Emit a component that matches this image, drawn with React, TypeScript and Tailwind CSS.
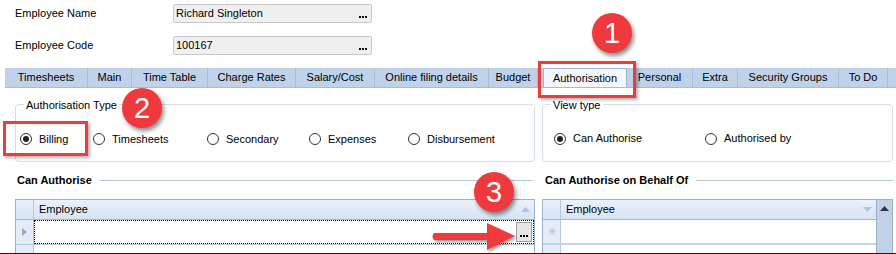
import React from "react";

const Radio = ({ checked }: { checked?: boolean }) => (
  <span className="flex h-[12px] w-[12px] shrink-0 items-center justify-center rounded-full border border-[#333] bg-white">
    {checked && <span className="h-[6px] w-[6px] rounded-full bg-[#222]" />}
  </span>
);

const RadioItem = ({ label, checked, w }: { label: string; checked?: boolean; w: string }) => (
  <div className={`flex items-center gap-[7px] ${w}`}>
    <Radio checked={checked} />
    <span>{label}</span>
  </div>
);

const Badge = ({ n, cls }: { n: string; cls: string }) => (
  <div
    className={`absolute flex h-[40px] w-[40px] items-center justify-center rounded-full bg-[#f0393c] text-[29px] leading-none text-white shadow-[2px_3px_4px_rgba(0,0,0,0.45)] ${cls}`}
    style={{ fontFamily: "'Liberation Sans', Arial, sans-serif" }}
  >
    {n}
  </div>
);

const tabs: { t: string; w: string; active?: boolean }[] = [
  { t: "Timesheets", w: "w-[83px]" },
  { t: "Main", w: "w-[44px]" },
  { t: "Time Table", w: "w-[76px]" },
  { t: "Charge Rates", w: "w-[88px]" },
  { t: "Salary/Cost", w: "w-[79px]" },
  { t: "Online filing details", w: "w-[114px]" },
  { t: "Budget", w: "w-[49px]" },
];
const tabs2 = [
  { t: "Personal", w: "w-[66px]" },
  { t: "Extra", w: "w-[45px]" },
  { t: "Security Groups", w: "w-[101px]" },
  { t: "To Do", w: "w-[49px]" },
];

const Dots = () => (
  <span className="flex items-end gap-[1px] pb-[1px]">
    <span className="h-[2px] w-[2px] bg-black" />
    <span className="h-[2px] w-[2px] bg-black" />
    <span className="h-[2px] w-[2px] bg-black" />
  </span>
);

export default function App() {
  return (
    <div
      className="relative flex h-[254px] w-[896px] flex-col overflow-hidden bg-white text-[11px] text-black"
      style={{ fontFamily: "'Liberation Sans', Arial, sans-serif" }}
    >
      {/* Top fields */}
      <div className="flex flex-col gap-[13px] pl-[15px] pt-[4px]">
        {[
          ["Employee Name", "Richard Singleton"],
          ["Employee Code", "100167"],
        ].map(([l, v]) => (
          <div key={l} className="flex h-[19px] items-center">
            <span className="w-[158px]">{l}</span>
            <div className="flex h-[19px] w-[199px] items-center justify-between rounded-[2px] border border-[#c8c8c8] bg-[#f0f0f0] pl-[2px] pr-[4px]">
              <span>{v}</span>
              <span className="flex h-full items-end pb-[3px]">
                <Dots />
              </span>
            </div>
          </div>
        ))}
      </div>

      {/* Tab bar */}
      <div className="ml-[5px] mt-[13px] flex h-[20px] items-stretch border-b border-[#a7bcd8] bg-[#bfd2ea]">
        {tabs.map((t) => (
          <div key={t.t} className={`flex items-center justify-center border-r border-[#a9bdd7] ${t.w}`}>
            {t.t}
          </div>
        ))}
        <div className="ml-[5px] flex w-[84px] items-center justify-center border border-b-0 border-[#9fb4d0] bg-[#f4f8fd]">
          Authorisation
        </div>
        {tabs2.map((t) => (
          <div key={t.t} className={`flex items-center justify-center border-r border-[#a9bdd7] ${t.w}`}>
            {t.t}
          </div>
        ))}
      </div>

      {/* Group boxes */}
      <div className="ml-[15px] mt-[16px] flex gap-[7px]">
        <div className="relative h-[58px] w-[520px] rounded-[4px] border border-[#d5dde6]">
          <span className="absolute left-[8px] top-[-8px] bg-white px-[2px]">Authorisation Type</span>
          <div className="flex h-full items-center pl-[4px] pt-[12px]">
            <RadioItem label="Billing" checked w="w-[73px]" />
            <RadioItem label="Timesheets" w="w-[114px]" />
            <RadioItem label="Secondary" w="w-[102px]" />
            <RadioItem label="Expenses" w="w-[99px]" />
            <RadioItem label="Disbursement" w="w-[110px]" />
          </div>
        </div>
        <div className="relative h-[58px] w-[351px] rounded-[4px] border border-[#d5dde6]">
          <span className="absolute left-[8px] top-[-8px] bg-white px-[2px]">View type</span>
          <div className="flex h-full items-center pl-[11px] pt-[11px]">
            <RadioItem label="Can Authorise" checked w="w-[151px]" />
            <RadioItem label="Authorised by" w="w-[120px]" />
          </div>
        </div>
      </div>

      {/* Section headers */}
      <div className="mt-[11px] flex h-[14px] items-center">
        <div className="ml-[17px] flex w-[516px] items-center">
          <span className="font-bold">Can Authorise</span>
          <span className="ml-[8px] h-[1px] flex-1 bg-[#b4c6dc]" />
        </div>
        <div className="ml-[12px] flex w-[348px] items-center">
          <span className="font-bold">Can Authorise on Behalf Of</span>
          <span className="ml-[8px] h-[1px] flex-1 bg-[#b4c6dc]" />
        </div>
      </div>

      {/* Grids */}
      <div className="ml-[15px] mt-[12px] flex flex-1 gap-[7px]">
        {/* grid 1 */}
        <div className="flex w-[520px] flex-col border-x border-t border-[#9bb0cc]">
          <div className="flex h-[20px] border-b border-[#a3b7d1] bg-gradient-to-b from-[#eaf2fb] to-[#d6e4f4]">
            <div className="w-[18px] border-r border-[#b7c8de]" />
            <div className="flex flex-1 items-center justify-between pl-[5px] pr-[4px]">
              <span>Employee</span>
              <svg width="9" height="5" viewBox="0 0 9 5">
                <path d="M0 5 L4.5 0 L9 5 Z" fill="#a9c4e6" />
              </svg>
            </div>
          </div>
          <div className="flex h-[25px] border-b border-[#b7c8de]">
            <div className="flex w-[18px] items-center justify-center border-r border-[#b7c8de] bg-[#e4ecf6]">
              <svg width="5" height="8" viewBox="0 0 5 8">
                <path d="M0 0 L5 4 L0 8 Z" fill="#9aa9bb" />
              </svg>
            </div>
            <div className="flex flex-1 items-center justify-end border border-dotted border-black pr-[1px]">
              <div className="flex h-[20px] w-[16px] items-end justify-center border border-[#a0a0a0] bg-[#e6e6e6] pb-[3px]">
                <Dots />
              </div>
            </div>
          </div>
          <div className="flex flex-1">
            <div className="w-[18px] border-r border-[#b7c8de] bg-[#e4ecf6]" />
          </div>
        </div>
        {/* grid 2 */}
        <div className="flex w-[351px] border-x border-t border-[#9bb0cc]">
          <div className="flex flex-1 flex-col">
            <div className="flex h-[20px] border-b border-[#a3b7d1] bg-gradient-to-b from-[#eaf2fb] to-[#d6e4f4]">
              <div className="w-[18px] border-r border-[#b7c8de]" />
              <div className="flex flex-1 items-center justify-between pl-[5px] pr-[4px]">
                <span>Employee</span>
                <svg width="9" height="5" viewBox="0 0 9 5">
                  <path d="M0 0 L4.5 5 L9 0 Z" fill="#a9c4e6" />
                </svg>
              </div>
            </div>
            <div className="flex h-[25px] border-b-2 border-[#c3d3e6]">
              <div className="flex w-[18px] items-center justify-center border-r border-[#b7c8de] bg-[#e4ecf6] text-[10px] text-[#b0bccb]">
                ✳
              </div>
              <div className="flex-1" />
            </div>
            <div className="flex flex-1">
              <div className="w-[18px] border-r border-[#b7c8de] bg-[#e4ecf6]" />
            </div>
          </div>
          <div className="flex w-[16px] flex-col items-center border-l border-[#9bb0cc] bg-[#c2d2e6] pt-[6px]">
            <svg width="9" height="5" viewBox="0 0 9 5">
              <path d="M0 5 L4.5 0 L9 5 Z" fill="#2b3440" />
            </svg>
          </div>
        </div>
      </div>
      <div className="h-[1px] bg-[#1c1c1c]" />

      {/* Annotations */}
      <div className="absolute left-[538px] top-[61px] h-[37px] w-[98px] border-[3px] border-[#ee3b3e] shadow-[2px_2px_3px_rgba(0,0,0,0.3)]" />
      <div className="absolute left-[3px] top-[121px] h-[35px] w-[85px] border-[3px] border-[#ee3b3e] shadow-[2px_2px_3px_rgba(0,0,0,0.3)]" />
      <Badge n="1" cls="left-[592px] top-[13px]" />
      <Badge n="2" cls="left-[122px] top-[88px]" />
      <Badge n="3" cls="left-[474px] top-[172px]" />
      <svg className="absolute left-[430px] top-[220px]" width="90" height="34" viewBox="0 0 90 34">
        <defs>
          <filter id="sh" x="-20%" y="-20%" width="140%" height="160%">
            <feDropShadow dx="1.5" dy="2" stdDeviation="1.5" floodColor="#000" floodOpacity="0.4" />
          </filter>
        </defs>
        <path
          d="M4 13 L57 13 L57 3 L85 16 L57 30 L57 20 L4 20 Q1 16.5 4 13 Z"
          fill="#ef3b3d"
          filter="url(#sh)"
        />
      </svg>
    </div>
  );
}
